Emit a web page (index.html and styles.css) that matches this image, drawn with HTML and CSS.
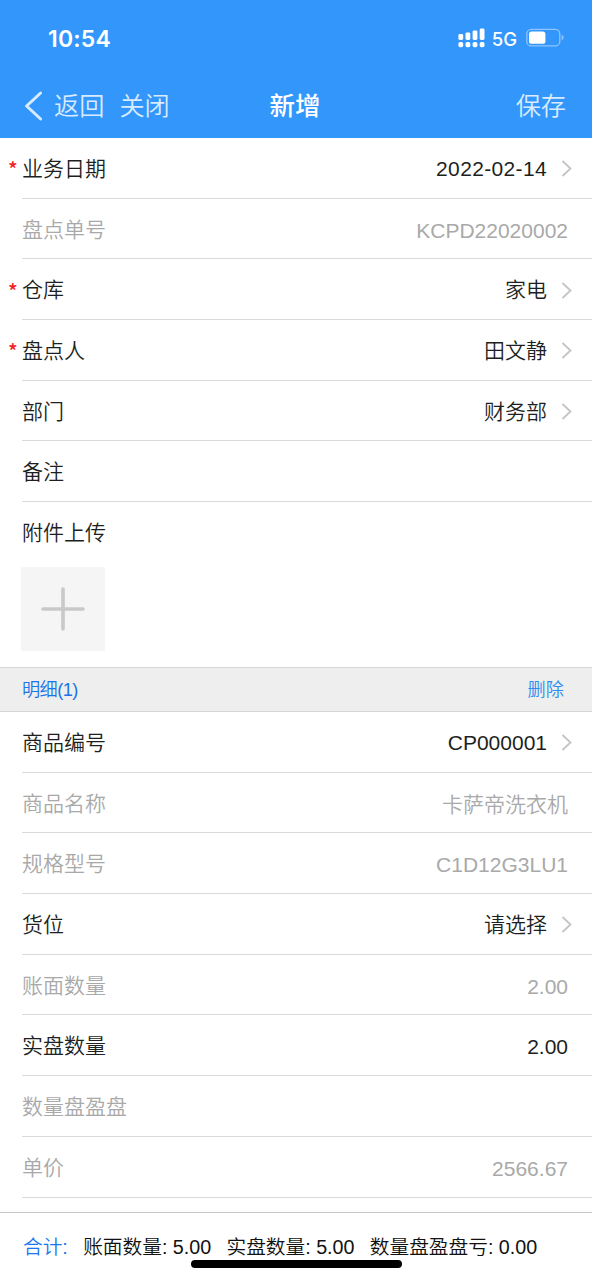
FILE: index.html
```html
<!DOCTYPE html>
<html lang="zh-CN">
<head>
<meta charset="utf-8">
<title>新增</title>
<link rel="stylesheet" href="styles.css">
</head>
<body>
<div class="app">
  <header class="header">
    <div class="status">
      <span class="time">10:54</span>
      <div class="status-right">
        <svg class="signal" width="28" height="20" viewBox="0 0 28 20" fill="#fff">
          <rect x="0.4" y="6" width="4.8" height="6" rx="1.4"/><rect x="7.5" y="4.4" width="4.8" height="7.6" rx="1.4"/><rect x="14.6" y="2.4" width="4.8" height="9.6" rx="1.4"/><rect x="21.7" y="0.6" width="4.8" height="11.4" rx="1.4"/>
          <rect x="0.4" y="14" width="4.8" height="5.2" rx="1.7"/><rect x="7.5" y="14" width="4.8" height="5.2" rx="1.7"/><rect x="14.6" y="14" width="4.8" height="5.2" rx="1.7"/><rect x="21.7" y="14" width="4.8" height="5.2" rx="1.7"/>
        </svg>
        <span class="net">5G</span>
        <svg class="battery" width="39" height="20" viewBox="0 0 39 20">
          <rect x="0.8" y="1.3" width="33" height="16.6" rx="4.5" fill="none" stroke="#8ec4ff" stroke-width="1.3"/>
          <rect x="3" y="3.4" width="16.4" height="12.4" rx="2.6" fill="#fff"/>
          <path d="M35.7 6.7q2 .8 2 2.9t-2 2.9z" fill="#8ec4ff"/>
        </svg>
      </div>
    </div>
    <nav class="nav">
      <div class="nav-left">
        <svg class="back" width="18" height="30" viewBox="0 0 18 30"><path d="M16.6 2L2.6 15l14 13" fill="none" stroke="#d8ebff" stroke-width="3" stroke-linecap="round" stroke-linejoin="round"/></svg>
        <span class="nav-back">返回</span><span>关闭</span>
      </div>
      <h1 class="title">新增</h1>
      <div class="nav-right">保存</div>
    </nav>
  </header>

  <main class="form">
    <div class="row"><span class="req">*</span><span class="label">业务日期</span><span class="value date">2022-02-14</span><svg class="arrow" viewBox="0 0 10 17"><path d="M1 1l8 7.5L1 16"/></svg></div>
    <div class="row muted"><span class="label">盘点单号</span><span class="value">KCPD22020002</span></div>
    <div class="row"><span class="req">*</span><span class="label">仓库</span><span class="value">家电</span><svg class="arrow" viewBox="0 0 10 17"><path d="M1 1l8 7.5L1 16"/></svg></div>
    <div class="row"><span class="req">*</span><span class="label">盘点人</span><span class="value">田文静</span><svg class="arrow" viewBox="0 0 10 17"><path d="M1 1l8 7.5L1 16"/></svg></div>
    <div class="row"><span class="label">部门</span><span class="value">财务部</span><svg class="arrow" viewBox="0 0 10 17"><path d="M1 1l8 7.5L1 16"/></svg></div>
    <div class="row"><span class="label">备注</span></div>
    <div class="row last"><span class="label">附件上传</span></div>
    <div class="upload"><svg width="44" height="44" viewBox="0 0 44 44"><path d="M22 2v40M2 22h40" stroke="#c9c9c9" stroke-width="3.6" stroke-linecap="round"/></svg></div>

    <div class="section"><span class="section-title">明细(1)</span><span class="delete">删除</span></div>

    <div class="row"><span class="label">商品编号</span><span class="value">CP000001</span><svg class="arrow" viewBox="0 0 10 17"><path d="M1 1l8 7.5L1 16"/></svg></div>
    <div class="row muted"><span class="label">商品名称</span><span class="value">卡萨帝洗衣机</span></div>
    <div class="row muted"><span class="label">规格型号</span><span class="value">C1D12G3LU1</span></div>
    <div class="row"><span class="label">货位</span><span class="value">请选择</span><svg class="arrow" viewBox="0 0 10 17"><path d="M1 1l8 7.5L1 16"/></svg></div>
    <div class="row muted"><span class="label">账面数量</span><span class="value">2.00</span></div>
    <div class="row plain"><span class="label">实盘数量</span><span class="value">2.00</span></div>
    <div class="row muted"><span class="label">数量盘盈盘</span></div>
    <div class="row muted"><span class="label">单价</span><span class="value">2566.67</span></div>
  </main>

  <footer class="footer">
    <span class="sum">合计:</span><span>账面数量: 5.00</span><span>实盘数量: 5.00</span><span>数量盘盈盘亏: 0.00</span>
    <div class="home-bar"></div>
  </footer>
</div>
</body>
</html>
```
FILE: styles.css
```css
* { box-sizing: border-box; }
body {
  margin: 0;
  background: #fff;
  font-family: "Liberation Sans", "Noto Sans CJK SC", sans-serif;
  font-weight: 350;
  color: #1d1f22;
}
.app {
  width: 592px;
  height: 1280px;
  display: flex;
  flex-direction: column;
  overflow: hidden;
}
.header {
  flex: none;
  height: 138px;
  background: #3396fb;
  color: #fff;
}
.status {
  height: 74px;
  padding: 2px 27px 0 48px;
  display: flex;
  align-items: center;
  justify-content: space-between;
  font-family: Inter, sans-serif;
}
.time { font-size: 23px; font-weight: 600; letter-spacing: 0.2px; padding-top: 1px; }
.status-right { display: flex; align-items: center; }
.net { font-size: 18.5px; font-weight: 500; margin: 1px 9px 0 6px; }
.nav {
  height: 62px;
  padding: 2px 26px 0 24px;
  display: grid;
  grid-template-columns: 1fr auto 1fr;
  align-items: center;
  font-size: 25.2px;
  line-height: 36px;
  color: #d8ebff;
}
.nav-left { display: flex; align-items: center; }
.back { margin-right: 12px; }
.nav-back { margin-right: 15px; }
.title { margin: 0; font-size: 25.5px; font-weight: 500; line-height: 36px; color: #fff; }
.nav-right { text-align: right; }

.form { flex: none; height: 1074px; }
.row {
  height: 60.7px;
  margin-left: 22px;
  padding: 2px 24px 0 0;
  display: flex;
  align-items: center;
  border-bottom: 1px solid #d9d9db;
  font-size: 21px;
  line-height: 30px;
}
.row.last { border-bottom: 0; }
.muted { color: #a9a9a9; }
.req {
  width: 14px;
  margin-left: -14px;
  color: #f22222;
  font-family: "Noto Sans CJK SC", sans-serif;
  font-size: 20px;
  font-weight: 500;
  line-height: 30px;
  padding-top: 1px;
}
.value { margin-left: auto; }
.muted .value, .plain .value { padding-top: 2px; }
.date { letter-spacing: 0.35px; }
.arrow {
  width: 11px;
  height: 17px;
  margin-left: 14px;
  margin-right: -4px;
  fill: none;
  stroke: #c4c4c7;
  stroke-width: 1.8;
}
.upload {
  width: 84px;
  height: 84px;
  margin: 4px 0 16px 21px;
  display: flex;
  align-items: center;
  justify-content: center;
  background: #f5f5f5;
}
.section {
  height: 45.2px;
  padding: 0 28px 2px 22px;
  display: flex;
  align-items: center;
  justify-content: space-between;
  background: #eee;
  border-top: 1px solid #d6d6d8;
  border-bottom: 1px solid #d6d6d8;
  font-size: 18.2px;
}
.section-title { color: #1a73e8; letter-spacing: -0.6px; }
.delete { color: #2a8ff0; }
.footer {
  position: relative;
  height: 68px;
  padding: 20px 0 0 23px;
  display: flex;
  border-top: 1px solid #c6c6c8;
  font-size: 19.7px;
  line-height: 28px;
  color: #111;
  white-space: nowrap;
  gap: 15.3px;
}
.sum { color: #1a78ee; }
.home-bar {
  position: absolute;
  left: 191px;
  top: 47px;
  width: 211px;
  height: 8px;
  border-radius: 4px;
  background: #000;
}
```
